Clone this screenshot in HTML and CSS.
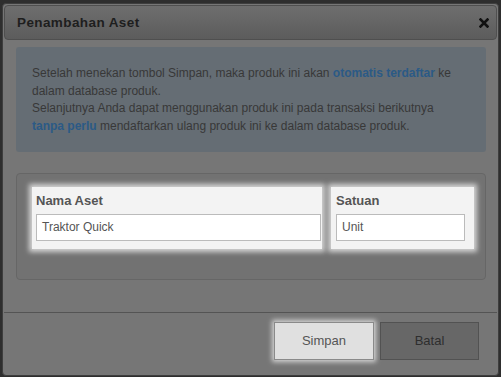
FILE: index.html
```html
<!DOCTYPE html>
<html>
<head>
<meta charset="utf-8">
<link rel="stylesheet" href="styles.css">
</head>
<body>
<div class="backdrop">
  <div class="modal">
    <div class="modal-header">
      <span class="title">Penambahan Aset</span>
      <svg class="close" width="10" height="10" viewBox="0 0 10 10"><path d="M1.5 1.5 L8.5 8.5 M8.5 1.5 L1.5 8.5" stroke="#111" stroke-width="2.6" stroke-linecap="square"/></svg>
    </div>
    <div class="modal-body">
      <div class="info">
        Setelah menekan tombol Simpan, maka produk ini akan <b class="hl">otomatis terdaftar</b> ke<br>
        dalam database produk.<br>
        Selanjutnya Anda dapat menggunakan produk ini pada transaksi berikutnya<br>
        <b class="hl">tanpa perlu</b> mendaftarkan ulang produk ini ke dalam database produk.
      </div>
      <div class="panel">
        <div class="group group-name">
          <div class="label">Nama Aset</div>
          <div class="input">Traktor Quick</div>
        </div>
        <div class="group group-unit">
          <div class="label">Satuan</div>
          <div class="input">Unit</div>
        </div>
      </div>
    </div>
    <div class="modal-footer">
      <div class="btn btn-save">Simpan</div>
      <div class="btn btn-cancel">Batal</div>
    </div>
  </div>
</div>
</body>
</html>
```

FILE: styles.css
```css
html, body {
  margin: 0;
  padding: 0;
  background: #2e2e2e;
  font-family: "Liberation Sans", Arial, sans-serif;
}
.backdrop {
  padding: 3px 0 0 2px;
  width: 501px;
  height: 377px;
  box-sizing: border-box;
}
.modal {
  width: 497px;
  height: 373px;
  box-sizing: border-box;
  background: #767676;
  border: 1px solid #3e3e3e;
  border-radius: 4px;
  padding: 1px;
  display: flex;
  flex-direction: column;
}
.modal-header {
  height: 35px;
  box-sizing: border-box;
  border: 1px solid #4f4f4f;
  border-radius: 4px;
  background: linear-gradient(#6e6e6e, #5c5c5c);
  display: flex;
  align-items: center;
  justify-content: space-between;
  padding: 0 7px 0 12px;
}
.title {
  font-weight: bold;
  font-size: 13.5px;
  color: #1e1e1e;
  letter-spacing: 0.4px;
}
.close {
  display: block;
  margin-top: 1px;
}
.modal-body {
  padding: 7px 11px 0 12px;
}
.info {
  background: #656d74;
  border-radius: 3px;
  padding: 18px 16px 16px 16px;
  font-size: 12px;
  line-height: 17.5px;
  color: #383838;
  height: 105px;
  box-sizing: border-box;
}
.hl {
  color: #2b5a86;
}
.panel {
  margin-top: 21px;
  height: 107px;
  box-sizing: border-box;
  border: 1px solid #666;
  border-radius: 4px;
  background: #727272;
  padding: 13px 10px 0 15px;
  display: flex;
  align-items: flex-start;
  gap: 9px;
}
.group {
  background: #f3f3f3;
  box-shadow: 0 0 5px 3px rgba(255, 255, 255, 0.7);
  padding: 0 1px 8px 4px;
  box-sizing: border-box;
}
.group-name {
  width: 290px;
}
.group-unit {
  width: 143px;
  padding: 0 9px 8px 5px;
}
.label {
  font-weight: bold;
  font-size: 13px;
  color: #555;
  height: 27px;
  line-height: 27px;
}
.input {
  height: 27px;
  box-sizing: border-box;
  border: 1px solid #bbb;
  background: #fff;
  font-size: 12px;
  color: #555;
  line-height: 25px;
  padding-left: 5px;
}
.modal-footer {
  margin-top: 32px;
  border-top: 1px solid #545454;
  display: flex;
  justify-content: flex-end;
  gap: 6px;
  padding: 9px 18px 0 0;
}
.btn {
  height: 38px;
  box-sizing: border-box;
  font-size: 13px;
  line-height: 36px;
  text-align: center;
}
.btn-save {
  width: 100px;
  background: #e0e0e0;
  border: 1px solid #8a8a8a;
  color: #555;
  box-shadow: 0 0 5px 2px rgba(255, 255, 255, 0.7);
}
.btn-cancel {
  width: 99px;
  background: #676767;
  border: 1px solid #525252;
  color: #2e2e2e;
}
```
